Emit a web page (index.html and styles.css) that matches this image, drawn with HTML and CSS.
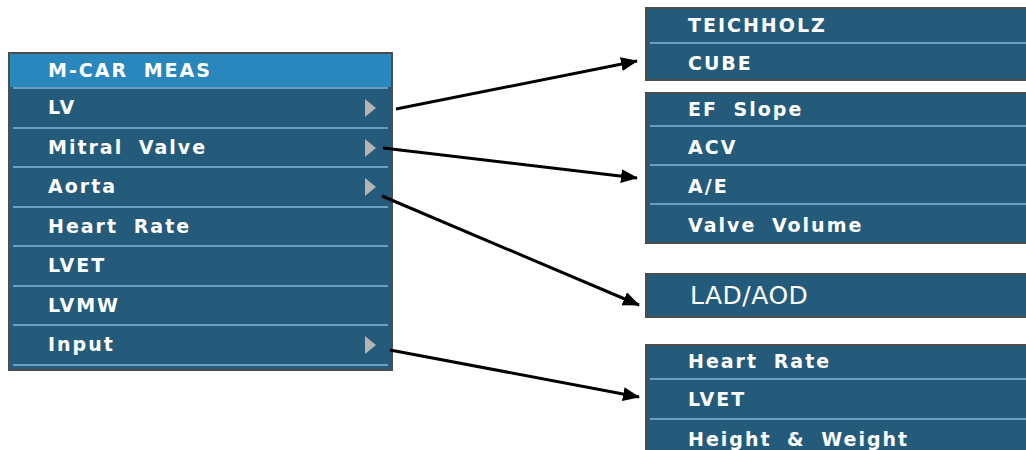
FILE: index.html
```html
<!DOCTYPE html>
<html lang="en">
<head>
  <meta charset="UTF-8" />
  <title>M-CAR MEAS menu</title>
  <link rel="stylesheet" href="styles.css">
</head>
<body>
  <div class="stage">
    <!-- Main menu -->
    <div class="menu">
      <div class="menu-title">M-CAR MEAS</div>
      <ul class="menu-list">
        <li class="has-sub">LV</li>
        <li class="has-sub">Mitral Valve</li>
        <li class="has-sub">Aorta</li>
        <li>Heart Rate</li>
        <li>LVET</li>
        <li>LVMW</li>
        <li class="has-sub">Input</li>
      </ul>
    </div>

    <!-- Sub menus -->
    <div class="subs">
      <ul class="panel panel-lv">
        <li>TEICHHOLZ</li>
        <li>CUBE</li>
      </ul>
      <ul class="panel panel-mv">
        <li>EF Slope</li>
        <li>ACV</li>
        <li>A/E</li>
        <li>Valve Volume</li>
      </ul>
      <ul class="panel panel-ao">
        <li>LAD/AOD</li>
      </ul>
      <ul class="panel panel-in">
        <li>Heart Rate</li>
        <li>LVET</li>
        <li>Height &amp; Weight</li>
      </ul>
    </div>
  </div>

  <!-- Arrows between menu and sub menus -->
  <svg class="arrows" width="1026" height="450" viewBox="0 0 1026 450">
    <defs>
      <marker id="head" markerUnits="userSpaceOnUse" markerWidth="17" markerHeight="14" refX="16" refY="7" orient="auto">
        <path d="M0,0 L17,7 L0,14 z" fill="#000" />
      </marker>
    </defs>
    <line x1="396" y1="109" x2="637" y2="61" marker-end="url(#head)" />
    <line x1="383" y1="148" x2="637" y2="178" marker-end="url(#head)" />
    <line x1="382" y1="196" x2="639" y2="305" marker-end="url(#head)" />
    <line x1="390" y1="350" x2="639" y2="397" marker-end="url(#head)" />
  </svg>
</body>
</html>
```
FILE: styles.css
```css
body {
  margin: 0;
  width: 1026px;
  height: 450px;
  overflow: hidden;
  background: #fff;
  font-family: "DejaVu Sans", Verdana, sans-serif;
  color: #fff;
  position: relative;
}

.stage {
  display: flex;
  align-items: flex-start;
}

ul {
  list-style: none;
  margin: 0;
  padding: 0;
}

/* main menu */
.menu {
  flex-shrink: 0;
  margin: 52px 0 0 8px;
  width: 381px;
  border: 2px solid #4c4c4c;
  background-color: #245b7b;
  padding-bottom: 3px;
}

.menu-title {
  height: 33px;
  line-height: 33px;
  padding-left: 38px;
  background-color: #2a87bd;
  font-size: 19px;
  font-weight: bold;
  letter-spacing: 2px;
  word-spacing: 7px;
}

.menu-list {
  margin: 0 3px;
  border-top: 2px solid #6d9dc1;
}

.menu-list li {
  position: relative;
  height: 37.5px;
  line-height: 37.5px;
  padding-left: 35px;
  border-bottom: 2px solid #6d9dc1;
  font-size: 19px;
  font-weight: bold;
  letter-spacing: 2px;
  word-spacing: 7px;
}

.menu-list li.has-sub::after {
  content: "";
  position: absolute;
  right: 12px;
  top: 10px;
  border-left: 11px solid #b4b4b4;
  border-top: 9px solid transparent;
  border-bottom: 9px solid transparent;
}

/* sub menus */
.subs {
  flex-shrink: 0;
  margin-left: 252px;
  padding-top: 7px;
  display: flex;
  flex-direction: column;
  width: 400px;
}

.panel {
  background-color: #245b7b;
  border: 2px solid #4c4c4c;
  border-right: none;
}

.panel li {
  margin-left: 3px;
  padding-left: 38px;
  border-top: 2px solid #6d9dc1;
  font-size: 19px;
  font-weight: bold;
  letter-spacing: 2px;
  word-spacing: 7px;
}

.panel li:first-child {
  border-top: none;
}

.panel-lv li {
  height: 31px;
  padding-top: 4px;
  line-height: 31px;
}

.panel-lv li:first-child {
  height: 33px;
  padding-top: 0;
  line-height: 33px;
}

.panel-mv {
  margin-top: 11px;
}

.panel-mv li {
  height: 34px;
  padding-top: 3px;
  line-height: 34px;
}

.panel-mv li:first-child {
  height: 31px;
  padding-top: 0;
  line-height: 31px;
}

.panel-ao {
  margin-top: 29px;
}

.panel-ao li {
  height: 41px;
  line-height: 41px;
  padding-left: 40px;
  font-size: 25px;
  font-weight: normal;
  letter-spacing: 0.5px;
}

.panel-in {
  margin-top: 26px;
}

.panel-in li {
  height: 38px;
  line-height: 38px;
}

.panel-in li:first-child {
  height: 32px;
  line-height: 30px;
}

.arrows {
  position: absolute;
  left: 0;
  top: 0;
}

.arrows line {
  stroke: #000;
  stroke-width: 3;
}
```
